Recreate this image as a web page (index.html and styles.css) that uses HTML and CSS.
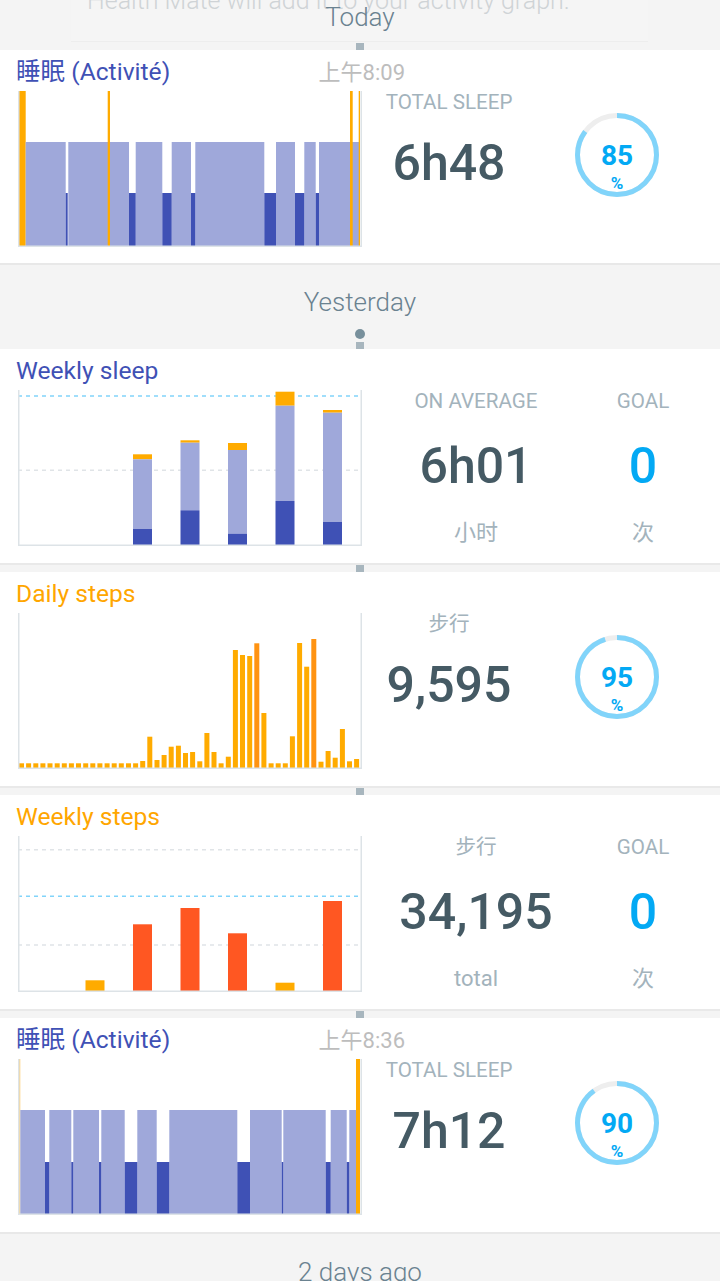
FILE: index.html
```html
<!DOCTYPE html>
<html lang="zh">
<head>
<meta charset="utf-8">
<title>Health Mate timeline</title>
<link rel="stylesheet" href="styles.css">
</head>
<body>
<div class="feed">

  <header class="day-head day-head--today">
    <div class="ghost-note"><p>Health Mate will add it to your activity graph.</p></div>
    <div class="day-label">Today</div>
    <span class="link-sq"></span>
  </header>

  <section class="card card--first">
    <div class="card-head">
      <h2 class="card-title card-title--sleep">睡眠 (Activité)</h2>
      <span class="card-time">上午8:09</span>
    </div>
    <div class="card-body">
      <svg class="chart" viewBox="0 0 344 156">
        <rect class="aw" x="1" y="0" width="6.7" height="155"/>
        <g class="lt">
          <rect x="7.7" y="51" width="40" height="104"/>
          <rect x="50.3" y="51" width="60.7" height="104"/>
          <rect x="117.7" y="51" width="26.6" height="104"/>
          <rect x="153.7" y="51" width="19.3" height="104"/>
          <rect x="177.3" y="51" width="69" height="104"/>
          <rect x="258" y="51" width="19" height="104"/>
          <rect x="286.3" y="51" width="11.4" height="104"/>
          <rect x="301" y="51" width="40.3" height="104"/>
        </g>
        <g class="dp">
          <rect x="47.7" y="102" width="2" height="53"/>
          <rect x="111" y="102" width="6.7" height="53"/>
          <rect x="144.3" y="102" width="9.4" height="53"/>
          <rect x="173" y="102" width="4.3" height="53"/>
          <rect x="246.3" y="102" width="11.7" height="53"/>
          <rect x="277" y="102" width="9.3" height="53"/>
          <rect x="297.7" y="102" width="3.3" height="53"/>
        </g>
        <g class="aw">
          <rect x="89.7" y="0" width="2.3" height="155"/>
          <rect x="332" y="0" width="2.7" height="155"/>
          <rect x="340.7" y="0" width="1.3" height="155"/>
        </g>
        <path class="frame" d="M0.75 0 V155.25 H343.25 V0"/>
      </svg>
      <div class="stats stats--single">
        <div class="stat-col">
          <div class="stat-label">TOTAL SLEEP</div>
          <div class="stat-value">6h48</div>
        </div>
        <svg class="ring" viewBox="0 0 84 84">
          <circle class="ring-track" cx="42" cy="42" r="39.5"/>
          <circle class="ring-fill" cx="42" cy="42" r="39.5" stroke-dasharray="210.96 248.19" transform="rotate(-90 42 42)"/>
          <text class="ring-num" x="42" y="51.5">85</text>
          <text class="ring-pct" x="42" y="76">%</text>
        </svg>
      </div>
    </div>
  </section>

  <header class="day-head day-head--mid">
    <div class="day-label">Yesterday</div>
    <span class="dot"></span>
    <span class="link-sq link-sq--after-dot"></span>
  </header>

  <section class="card">
    <div class="card-head">
      <h2 class="card-title card-title--sleep">Weekly sleep</h2>
    </div>
    <div class="card-body">
      <svg class="chart" viewBox="0 0 344 156">
        <line class="grid" x1="0" y1="80.3" x2="343" y2="80.3"/>
        <line class="grid grid--goal" x1="0" y1="6" x2="343" y2="6"/>
        <g>
          <rect class="aw" x="115" y="64.3" width="19" height="5"/>
          <rect class="lt" x="115" y="69.3" width="19" height="69.7"/>
          <rect class="dp" x="115" y="139" width="19" height="16"/>

          <rect class="aw" x="162.5" y="50.3" width="19" height="2.4"/>
          <rect class="lt" x="162.5" y="52.7" width="19" height="67.6"/>
          <rect class="dp" x="162.5" y="120.3" width="19" height="34.7"/>

          <rect class="aw" x="210" y="53" width="19" height="7"/>
          <rect class="lt" x="210" y="60" width="19" height="83.7"/>
          <rect class="dp" x="210" y="143.7" width="19" height="11.3"/>

          <rect class="aw" x="257.5" y="1.7" width="19" height="14"/>
          <rect class="lt" x="257.5" y="15.7" width="19" height="95.3"/>
          <rect class="dp" x="257.5" y="111" width="19" height="44"/>

          <rect class="aw" x="305" y="20" width="19" height="2.7"/>
          <rect class="lt" x="305" y="22.7" width="19" height="109.3"/>
          <rect class="dp" x="305" y="132" width="19" height="23"/>
        </g>
        <path class="frame" d="M0.75 0 V155.25 H343.25 V0"/>
      </svg>
      <div class="stats stats--pair">
        <div class="stat-col">
          <div class="stat-label">ON AVERAGE</div>
          <div class="stat-value">6h01</div>
          <div class="stat-unit">小时</div>
        </div>
        <div class="stat-col">
          <div class="stat-label">GOAL</div>
          <div class="stat-value stat-value--goal">0</div>
          <div class="stat-unit">次</div>
        </div>
      </div>
    </div>
  </section>

  <div class="gap"><span class="link-sq"></span></div>

  <section class="card">
    <div class="card-head">
      <h2 class="card-title card-title--steps">Daily steps</h2>
    </div>
    <div class="card-body">
      <svg class="chart" viewBox="0 0 344 156">
        <g class="st">
          <rect x="1" y="150.3" width="5" height="4.7"/>
          <rect x="8.1" y="150.3" width="5" height="4.7"/>
          <rect x="15.3" y="150.3" width="5" height="4.7"/>
          <rect x="22.4" y="150.3" width="5" height="4.7"/>
          <rect x="29.5" y="150.3" width="5" height="4.7"/>
          <rect x="36.7" y="150.3" width="5" height="4.7"/>
          <rect x="43.8" y="150.3" width="5" height="4.7"/>
          <rect x="50.9" y="150.3" width="5" height="4.7"/>
          <rect x="58" y="150.3" width="5" height="4.7"/>
          <rect x="65.2" y="150.3" width="5" height="4.7"/>
          <rect x="72.3" y="150.3" width="5" height="4.7"/>
          <rect x="79.4" y="150.3" width="5" height="4.7"/>
          <rect x="86.6" y="150.3" width="5" height="4.7"/>
          <rect x="93.7" y="150.3" width="5" height="4.7"/>
          <rect x="100.8" y="150.3" width="5" height="4.7"/>
          <rect x="108" y="150.3" width="5" height="4.7"/>
          <rect x="115.1" y="150.3" width="5" height="4.7"/>
          <rect x="122.2" y="148" width="5" height="7"/>
          <rect x="129.3" y="123.7" width="5" height="31.3"/>
          <rect x="136.5" y="147" width="5" height="8"/>
          <rect x="143.6" y="142" width="5" height="13"/>
          <rect x="150.7" y="133.7" width="5" height="21.3"/>
          <rect x="157.9" y="132.7" width="5" height="22.3"/>
          <rect x="165" y="140" width="5" height="15"/>
          <rect x="172.1" y="139" width="5" height="16"/>
          <rect x="179.3" y="148.3" width="5" height="6.7"/>
          <rect x="186.4" y="120" width="5" height="35"/>
          <rect x="193.5" y="139" width="5" height="16"/>
          <rect x="200.6" y="150.3" width="5" height="4.7"/>
          <rect x="207.8" y="143.7" width="5" height="11.3"/>
          <rect x="214.9" y="37" width="5" height="118"/>
          <rect x="222" y="42" width="5" height="113"/>
          <rect x="229.2" y="43" width="5" height="112"/>
          <rect class="st-hi" x="236.3" y="30.3" width="5" height="124.7"/>
          <rect x="243.4" y="100" width="5" height="55"/>
          <rect x="250.6" y="150.3" width="5" height="4.7"/>
          <rect x="257.7" y="150.3" width="5" height="4.7"/>
          <rect x="264.8" y="150.3" width="5" height="4.7"/>
          <rect x="271.9" y="123.3" width="5" height="31.7"/>
          <rect x="279.1" y="30" width="5" height="125"/>
          <rect x="286.2" y="53.7" width="5" height="101.3"/>
          <rect class="st-hi" x="293.3" y="26" width="5" height="129"/>
          <rect x="300.5" y="148.7" width="5" height="6.3"/>
          <rect x="307.6" y="138" width="5" height="17"/>
          <rect x="314.7" y="144.7" width="5" height="10.3"/>
          <rect x="321.9" y="116" width="5" height="39"/>
          <rect x="329" y="148.3" width="5" height="6.7"/>
          <rect x="336.1" y="146" width="5" height="9"/>
        </g>
        <path class="frame" d="M0.75 0 V155.25 H343.25 V0"/>
      </svg>
      <div class="stats stats--single">
        <div class="stat-col">
          <div class="stat-label">步行</div>
          <div class="stat-value">9,595</div>
        </div>
        <svg class="ring" viewBox="0 0 84 84">
          <circle class="ring-track" cx="42" cy="42" r="39.5"/>
          <circle class="ring-fill" cx="42" cy="42" r="39.5" stroke-dasharray="235.78 248.19" transform="rotate(-90 42 42)"/>
          <text class="ring-num" x="42" y="51.5">95</text>
          <text class="ring-pct" x="42" y="76">%</text>
        </svg>
      </div>
    </div>
  </section>

  <div class="gap"><span class="link-sq"></span></div>

  <section class="card">
    <div class="card-head">
      <h2 class="card-title card-title--steps">Weekly steps</h2>
    </div>
    <div class="card-body">
      <svg class="chart" viewBox="0 0 344 156">
        <line class="grid" x1="0" y1="13.7" x2="343" y2="13.7"/>
        <line class="grid grid--goal" x1="0" y1="60.3" x2="343" y2="60.3"/>
        <line class="grid" x1="0" y1="109" x2="343" y2="109"/>
        <rect class="aw" x="67.5" y="144.3" width="19" height="10.7"/>
        <rect class="red" x="115" y="88.3" width="19" height="66.7"/>
        <rect class="red" x="162.5" y="72" width="19" height="83"/>
        <rect class="red" x="210" y="97.3" width="19" height="57.7"/>
        <rect class="aw" x="257.5" y="146.7" width="19" height="8.3"/>
        <rect class="red" x="305" y="65" width="19" height="90"/>
        <path class="frame" d="M0.75 0 V155.25 H343.25 V0"/>
      </svg>
      <div class="stats stats--pair">
        <div class="stat-col">
          <div class="stat-label">步行</div>
          <div class="stat-value">34,195</div>
          <div class="stat-unit">total</div>
        </div>
        <div class="stat-col">
          <div class="stat-label">GOAL</div>
          <div class="stat-value stat-value--goal">0</div>
          <div class="stat-unit">次</div>
        </div>
      </div>
    </div>
  </section>

  <div class="gap"><span class="link-sq"></span></div>

  <section class="card">
    <div class="card-head">
      <h2 class="card-title card-title--sleep">睡眠 (Activité)</h2>
      <span class="card-time">上午8:36</span>
    </div>
    <div class="card-body">
      <svg class="chart" viewBox="0 0 344 156">
        <rect class="aw-faint" x="1" y="0" width="1.3" height="155"/>
        <g class="lt">
          <rect x="2.3" y="51" width="24.7" height="104"/>
          <rect x="31.3" y="51" width="22" height="104"/>
          <rect x="55.3" y="51" width="25.7" height="104"/>
          <rect x="83.3" y="51" width="23.4" height="104"/>
          <rect x="119.3" y="51" width="19.4" height="104"/>
          <rect x="151.3" y="51" width="68" height="104"/>
          <rect x="232" y="51" width="31.7" height="104"/>
          <rect x="265.3" y="51" width="42.4" height="104"/>
          <rect x="312.7" y="51" width="16" height="104"/>
          <rect x="331.3" y="51" width="6.7" height="104"/>
        </g>
        <g class="dp">
          <rect x="27" y="103" width="4.3" height="52"/>
          <rect x="53.3" y="103" width="2" height="52"/>
          <rect x="81" y="103" width="2.3" height="52"/>
          <rect x="106.7" y="103" width="12.6" height="52"/>
          <rect x="138.7" y="103" width="12.6" height="52"/>
          <rect x="219.3" y="103" width="12.7" height="52"/>
          <rect x="263.7" y="103" width="1.6" height="52"/>
          <rect x="307.7" y="103" width="5" height="52"/>
          <rect x="328.7" y="103" width="2.6" height="52"/>
        </g>
        <rect class="aw" x="338" y="0" width="4" height="155"/>
        <path class="frame" d="M0.75 0 V155.25 H343.25 V0"/>
      </svg>
      <div class="stats stats--single">
        <div class="stat-col">
          <div class="stat-label">TOTAL SLEEP</div>
          <div class="stat-value">7h12</div>
        </div>
        <svg class="ring" viewBox="0 0 84 84">
          <circle class="ring-track" cx="42" cy="42" r="39.5"/>
          <circle class="ring-fill" cx="42" cy="42" r="39.5" stroke-dasharray="223.37 248.19" transform="rotate(-90 42 42)"/>
          <text class="ring-num" x="42" y="51.5">90</text>
          <text class="ring-pct" x="42" y="76">%</text>
        </svg>
      </div>
    </div>
  </section>

  <header class="day-head day-head--end">
    <div class="day-label">2 days ago</div>
  </header>

</div>
</body>
</html>
```

FILE: styles.css
```css
html, body {
  margin: 0;
  padding: 0;
}

body {
  background: #f4f4f4;
  font-family: Roboto, "Noto Sans CJK SC", sans-serif;
  overflow: hidden;
}

.feed {
  width: 720px;
}

/* ---------- day headers ---------- */
.day-head {
  display: flex;
  flex-direction: column;
  align-items: center;
  box-sizing: border-box;
}

.day-label {
  position: relative;
  font-size: 26px;
  font-weight: 300;
  line-height: 30px;
  color: #6a8290;
}

.day-head--today {
  position: relative;
  height: 50px;
  padding-top: 2px;
}

.day-head--today .link-sq {
  margin-top: auto;
}

.ghost-note {
  position: absolute;
  left: 71px;
  right: 72px;
  top: 0;
  height: 41px;
  background: #f5f5f5;
  border-bottom: 1px solid #ededed;
  overflow: hidden;
}

.ghost-note p {
  margin: -13px 0 0 16px;
  font-size: 25px;
  font-weight: 300;
  line-height: 28px;
  color: #cfd3d6;
  white-space: nowrap;
}

.day-head--mid {
  height: 86px;
  border-top: 2px solid #e8e8e8;
  padding-top: 22px;
}

.day-head--end {
  height: 60px;
  border-top: 2px solid #e8e8e8;
  padding-top: 23px;
}

.dot {
  width: 10px;
  height: 10px;
  border-radius: 50%;
  background: #78909c;
  margin-top: 12px;
}

.link-sq {
  display: block;
  width: 8px;
  height: 7px;
  background: #a8b6be;
}

.link-sq--after-dot {
  margin-top: 3px;
}

.gap {
  height: 9px;
  box-sizing: border-box;
  border-top: 2px solid #e9e9e9;
  display: flex;
  justify-content: center;
  align-items: flex-end;
}

/* ---------- cards ---------- */
.card {
  background: #ffffff;
  height: 214px;
  box-sizing: border-box;
  padding-top: 7px;
}

.card--first {
  height: 213px;
}

.card-head {
  display: flex;
  justify-content: space-between;
  align-items: baseline;
  width: 389px;
  margin-left: 16px;
  height: 30px;
}

.card-title {
  margin: 0;
  font-size: 24.6px;
  font-weight: 400;
  line-height: 30px;
  white-space: nowrap;
}

.card-title--sleep {
  color: #3f51b5;
}

.card-title--steps {
  color: #ffa600;
}

.card-time {
  font-size: 22px;
  line-height: 30px;
  color: #bdbdbd;
  white-space: nowrap;
}

.card-body {
  display: flex;
  margin-top: 4px;
}

/* ---------- charts ---------- */
.chart {
  display: block;
  flex: none;
  width: 344px;
  height: 156px;
  margin-left: 18px;
}

.frame {
  fill: none;
  stroke: #dde3e7;
  stroke-width: 1.5;
}

.lt, .lt rect {
  fill: #9fa8da;
}

.dp, .dp rect {
  fill: #3f51b5;
}

.aw, .aw rect {
  fill: #ffab00;
}

.aw-faint {
  fill: #ffd27a;
}

.st rect {
  fill: #ffab00;
}

.st rect.st-hi {
  fill: #ff9312;
}

.red {
  fill: #ff5722;
}

.grid {
  stroke: #e0e4e7;
  stroke-width: 1.5;
  stroke-dasharray: 4 4;
}

.grid--goal {
  stroke: #81d4fa;
}

/* ---------- stats ---------- */
.stats {
  display: flex;
  margin-left: 8px;
}

.stat-col {
  display: flex;
  flex-direction: column;
  align-items: center;
}

.stats--single .stat-col {
  width: 158px;
}

.stats--pair .stat-col:first-child {
  width: 212px;
}

.stats--pair .stat-col:last-child {
  width: 122px;
}

.stat-label {
  font-size: 20.6px;
  line-height: 22px;
  color: #a3b3bc;
  white-space: nowrap;
}

.stat-value {
  font-size: 50px;
  font-weight: 500;
  line-height: 56px;
  color: #455a64;
  margin-top: 22px;
  white-space: nowrap;
}

.stats--pair .stat-value {
  margin-top: 26px;
}

.stat-value--goal {
  color: #03a9f4;
}

.stat-unit {
  font-size: 22px;
  line-height: 26px;
  color: #a3b3bc;
  margin-top: 26px;
}

/* ---------- ring ---------- */
.ring {
  display: block;
  flex: none;
  width: 84px;
  height: 84px;
  margin-left: 47px;
  margin-top: 22px;
}

.ring-track {
  fill: none;
  stroke: #eeeeee;
  stroke-width: 5;
}

.ring-fill {
  fill: none;
  stroke: #81d4fa;
  stroke-width: 5;
}

.ring-num {
  font-family: Roboto, sans-serif;
  font-size: 28px;
  font-weight: 700;
  fill: #03a9f4;
  text-anchor: middle;
}

.ring-pct {
  font-family: Roboto, sans-serif;
  font-size: 17px;
  font-weight: 700;
  fill: #03a9f4;
  text-anchor: middle;
}
```
